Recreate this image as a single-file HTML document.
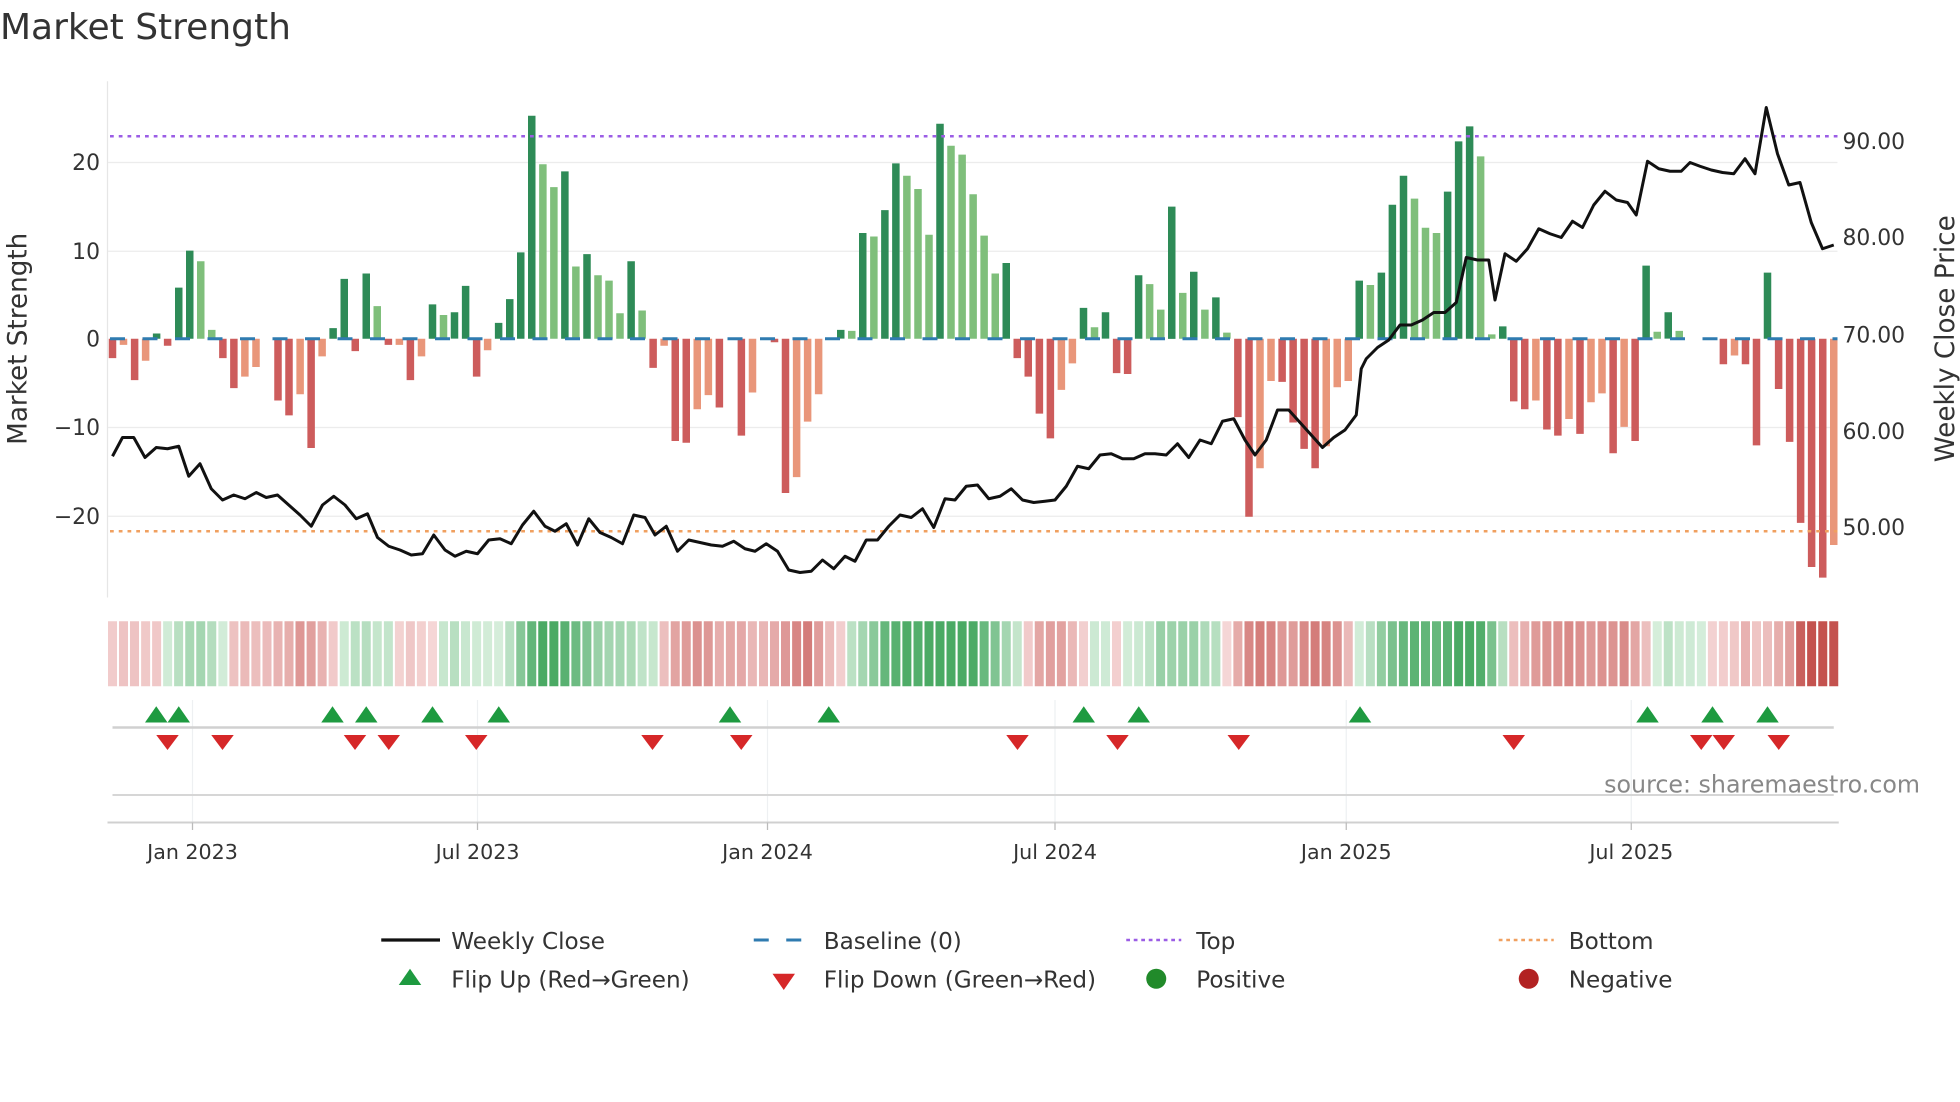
<!DOCTYPE html>
<html><head><meta charset="utf-8"><style>
html,body{margin:0;padding:0;background:#fff;width:1960px;height:1102px;overflow:hidden}
svg{display:block}
text{font-family:"DejaVu Sans","Liberation Sans",sans-serif}
</style></head><body>
<svg id="s" width="1960" height="1102" viewBox="0 0 1568 881.6" xmlns="http://www.w3.org/2000/svg">
<text x="0" y="31" font-size="28.8" fill="#333">Market Strength</text>
<g stroke="#ececec" stroke-width="1">
<line x1="86" x2="1470" y1="130" y2="130"/><line x1="86" x2="1470" y1="201" y2="201"/>
<line x1="86" x2="1470" y1="342" y2="342"/><line x1="86" x2="1470" y1="413" y2="413"/>
</g>
<line x1="86" x2="86" y1="65" y2="478" stroke="#e6e6e6"/>
<g font-size="17.5" fill="#333" text-anchor="end">
<text x="80" y="136">20</text><text x="80" y="207">10</text><text x="80" y="277">0</text>
<text x="80" y="348">−10</text><text x="80" y="419">−20</text></g>
<g font-size="17.5" fill="#333">
<text x="1474" y="119">90.00</text><text x="1474" y="196">80.00</text><text x="1474" y="274">70.00</text>
<text x="1474" y="351">60.00</text><text x="1474" y="428">50.00</text></g>
<text transform="translate(21,271) rotate(-90)" font-size="21" fill="#333" text-anchor="middle">Market Strength</text>
<text transform="translate(1563,271) rotate(-90)" font-size="21" fill="#333" text-anchor="middle">Weekly Close Price</text>
<g id="bars"></g>
<line x1="88" x2="1470" y1="271" y2="271" stroke="#2f7bb0" stroke-width="2.4" stroke-dasharray="12,14"/>
<line x1="88" x2="1470" y1="109" y2="109" stroke="#9b5de5" stroke-width="2" stroke-dasharray="3,4"/>
<line x1="88" x2="1470" y1="425" y2="425" stroke="#f0a060" stroke-width="2" stroke-dasharray="3,4"/>
<polyline id="price" fill="none" stroke="#111" stroke-width="2.4" stroke-linejoin="round"/>
<g id="strip"></g>
<g stroke="#eef0f2" stroke-width="1">
<line x1="154" x2="154" y1="560" y2="658"/><line x1="382" x2="382" y1="560" y2="658"/>
<line x1="614" x2="614" y1="560" y2="658"/><line x1="844" x2="844" y1="560" y2="658"/>
<line x1="1077" x2="1077" y1="560" y2="658"/><line x1="1305" x2="1305" y1="560" y2="658"/></g>
<line x1="90" x2="1467" y1="582" y2="582" stroke="#d0d0d0" stroke-width="2"/>
<line x1="90" x2="1467" y1="636" y2="636" stroke="#d6d6d6" stroke-width="1.6"/>
<line x1="86" x2="1471" y1="658" y2="658" stroke="#d0d0d0" stroke-width="1.6"/>
<g stroke="#bbb"><line x1="154" x2="154" y1="658" y2="664"/><line x1="382" x2="382" y1="658" y2="664"/>
<line x1="614" x2="614" y1="658" y2="664"/><line x1="844" x2="844" y1="658" y2="664"/>
<line x1="1077" x2="1077" y1="658" y2="664"/><line x1="1305" x2="1305" y1="658" y2="664"/></g>
<g id="flips"></g>
<text x="1536" y="634" font-size="19" fill="#888" text-anchor="end">source: sharemaestro.com</text>
<g font-size="16.5" fill="#333" text-anchor="middle">
<text x="154" y="687">Jan 2023</text><text x="382" y="687">Jul 2023</text><text x="614" y="687">Jan 2024</text>
<text x="844" y="687">Jul 2024</text><text x="1077" y="687">Jan 2025</text><text x="1305" y="687">Jul 2025</text></g>
<g font-size="18.5" fill="#333">
<line x1="305" x2="352" y1="752" y2="752" stroke="#111" stroke-width="2.6"/><text x="361" y="759">Weekly Close</text>
<line x1="603" x2="647" y1="752" y2="752" stroke="#2f7bb0" stroke-width="2.4" stroke-dasharray="12,14"/><text x="659" y="759">Baseline (0)</text>
<line x1="901" x2="945" y1="752" y2="752" stroke="#9b5de5" stroke-width="2" stroke-dasharray="3,3"/><text x="957" y="759">Top</text>
<line x1="1199" x2="1243" y1="752" y2="752" stroke="#f0a060" stroke-width="2" stroke-dasharray="3,3"/><text x="1255" y="759">Bottom</text>
<polygon points="328,775 337,788 319,788" fill="#1e9a40"/><text x="361" y="790">Flip Up (Red→Green)</text>
<polygon points="618,779 636,779 627,792" fill="#d62728"/><text x="659" y="790">Flip Down (Green→Red)</text>
<circle cx="925" cy="783" r="8" fill="#218a2a"/><text x="957" y="790">Positive</text>
<circle cx="1223" cy="783" r="8" fill="#b22222"/><text x="1255" y="790">Negative</text>
</g>
</svg>
<script>
var d=[[-2.2,'R'],[-0.7,'O'],[-4.7,'R'],[-2.5,'O'],[0.6,'D'],[-0.8,'R'],[5.8,'D'],[10,'D'],[8.8,'L'],[1,'L'],
[-2.2,'R'],[-5.6,'R'],[-4.3,'O'],[-3.2,'O'],[0,'R'],[-7,'R'],[-8.7,'R'],[-6.3,'O'],[-12.4,'R'],[-2,'O'],
[1.2,'D'],[6.8,'D'],[-1.4,'R'],[7.4,'D'],[3.7,'L'],[-0.7,'R'],[-0.7,'O'],[-4.7,'R'],[-2,'O'],[3.9,'D'],
[2.7,'L'],[3,'D'],[6,'D'],[-4.3,'R'],[-1.3,'O'],[1.8,'D'],[4.5,'D'],[9.8,'D'],[25.3,'D'],[19.8,'L'],
[17.2,'L'],[19,'D'],[8.2,'L'],[9.6,'D'],[7.2,'L'],[6.6,'L'],[2.9,'L'],[8.8,'D'],[3.2,'L'],[-3.3,'R'],
[-0.8,'O'],[-11.6,'R'],[-11.8,'R'],[-8,'O'],[-6.4,'O'],[-7.8,'R'],[0,'R'],[-11,'R'],[-6.1,'O'],[0,'R'],
[-0.4,'R'],[-17.5,'R'],[-15.7,'O'],[-9.4,'O'],[-6.3,'O'],[0,'D'],[1,'D'],[0.9,'L'],[12,'D'],[11.6,'L'],
[14.6,'D'],[19.9,'D'],[18.5,'L'],[17,'L'],[11.8,'L'],[24.4,'D'],[21.9,'L'],[20.9,'L'],[16.4,'L'],[11.7,'L'],
[7.4,'L'],[8.6,'D'],[-2.2,'R'],[-4.3,'R'],[-8.5,'R'],[-11.3,'R'],[-5.8,'O'],[-2.8,'O'],[3.5,'D'],[1.3,'L'],
[3,'D'],[-3.9,'R'],[-4,'R'],[7.2,'D'],[6.2,'L'],[3.3,'L'],[15,'D'],[5.2,'L'],[7.6,'D'],[3.3,'L'],
[4.7,'D'],[0.7,'L'],[-8.9,'R'],[-20.2,'R'],[-14.7,'O'],[-4.8,'O'],[-4.9,'R'],[-9.5,'R'],[-12.5,'R'],[-14.7,'R'],
[-12.2,'O'],[-5.5,'O'],[-4.8,'O'],[6.6,'D'],[6.1,'L'],[7.5,'D'],[15.2,'D'],[18.5,'D'],[15.9,'L'],[12.6,'L'],
[12,'L'],[16.7,'D'],[22.4,'D'],[24.1,'D'],[20.7,'L'],[0.5,'L'],[1.4,'D'],[-7.1,'R'],[-8,'R'],[-7,'O'],
[-10.3,'R'],[-11,'R'],[-9.1,'O'],[-10.8,'R'],[-7.2,'O'],[-6.2,'O'],[-13,'R'],[-10,'O'],[-11.6,'R'],[8.3,'D'],
[0.8,'L'],[3,'D'],[0.9,'L'],[0,'R'],[0,'R'],[0,'R'],[-2.9,'R'],[-1.9,'O'],[-2.9,'R'],[-12.1,'R'],
[7.5,'D'],[-5.7,'R'],[-11.7,'R'],[-20.9,'R'],[-25.9,'R'],[-27.1,'R'],[-23.4,'O']];
var C={D:'#2e8b57',L:'#7fbf7b',R:'#cd5c5c',O:'#e9967a'};
var n=d.length,x0=90,st=(1467-90)/(n-1),h='',s='';
function mix(a,b,t){var r='#';for(var k=0;k<3;k++){var v=Math.round(a[k]+(b[k]-a[k])*t);r+=(v<16?'0':'')+v.toString(16);}return r;}
for(var i=0;i<n;i++){var v=d[i][0],x=x0+i*st,y=271-v*7.05;
 if(v!=0)h+='<rect x="'+(x-3).toFixed(1)+'" y="'+Math.min(y,271).toFixed(1)+'" width="6" height="'+Math.abs(v*7.05).toFixed(1)+'" fill="'+C[d[i][1]]+'"/>';
 var a=0,c=0;for(var k=-2;k<=1;k++){if(d[i+k]){a+=d[i+k][0];c++;}}a/=c;
 var t=Math.min(1,Math.abs(a)/18),col=a>=0?mix([214,238,219],[74,170,100],t):mix([245,214,214],[196,82,78],t);
 s+='<rect x="'+(x-st/2+0.8).toFixed(1)+'" y="497" width="'+(st-1.6).toFixed(1)+'" height="52" fill="'+col+'"/>';}
document.getElementById('bars').innerHTML=h;document.getElementById('strip').innerHTML=s;
var p=[90,365,98,350,107,350,116,366,125,358,134,359,143,357,151,381,160,371,169,391,178,400,187,396,196,399,205,394,213,398,222,396,231,404,240,412,249,421,258,404,267,397,276,404,285,415,294,411,302,430,311,437,320,440,329,444,338,443,347,428,356,440,364,445,373,441,382,443,391,432,400,431,409,435,418,420,427,409,436,421,444,425,453,419,462,436,471,415,480,426,489,430,498,435,507,412,516,414,524,428,533,421,542,441,551,432,560,434,569,436,578,437,587,433,596,439,604,441,613,435,622,441,631,456,640,458,649,457,658,448,667,455,676,445,684,449,693,432,702,432,711,421,720,412,729,414,738,407,747,422,756,399,764,400,773,389,782,388,791,399,800,397,809,391,818,400,827,402,836,401,844,400,853,389,862,373,871,375,880,364,889,363,898,367,907,367,916,363,924,363,933,364,942,355,951,366,960,352,969,355,978,337,987,335,996,352,1004,364,1013,352,1022,328,1031,328,1040,338,1049,348,1058,358,1067,350,1076,344,1085,332,1089,295,1093,287,1102,278,1111,272,1120,260,1129,260,1138,256,1147,250,1156,250,1165,242,1173,206,1182,208,1191,208,1196,240,1204,203,1213,209,1222,199,1231,183,1240,187,1249,190,1258,177,1266,182,1275,164,1284,153,1293,160,1302,162,1309,172,1318,129,1327,135,1336,137,1345,137,1352,130,1360,133,1369,136,1378,138,1387,139,1396,127,1404,139,1413,86,1422,123,1431,148,1440,146,1449,178,1458,199,1467,196];
var ps='';for(var i=0;i<p.length;i+=2)ps+=p[i]+','+p[i+1]+' ';document.getElementById('price').setAttribute('points',ps);
var up=[125,143,266,293,346,399,584,663,867,911,1088,1318,1370,1414],dn=[134,178,284,311,381,522,593,814,894,991,1211,1361,1379,1423],f='';
up.forEach(function(x){f+='<polygon points="'+x+',565 '+(x+9)+',578 '+(x-9)+',578" fill="#1e9a40"/>';});
dn.forEach(function(x){f+='<polygon points="'+(x-9)+',588 '+(x+9)+',588 '+x+',600" fill="#d62728"/>';});
document.getElementById('flips').innerHTML=f;
</script>
</body></html>
